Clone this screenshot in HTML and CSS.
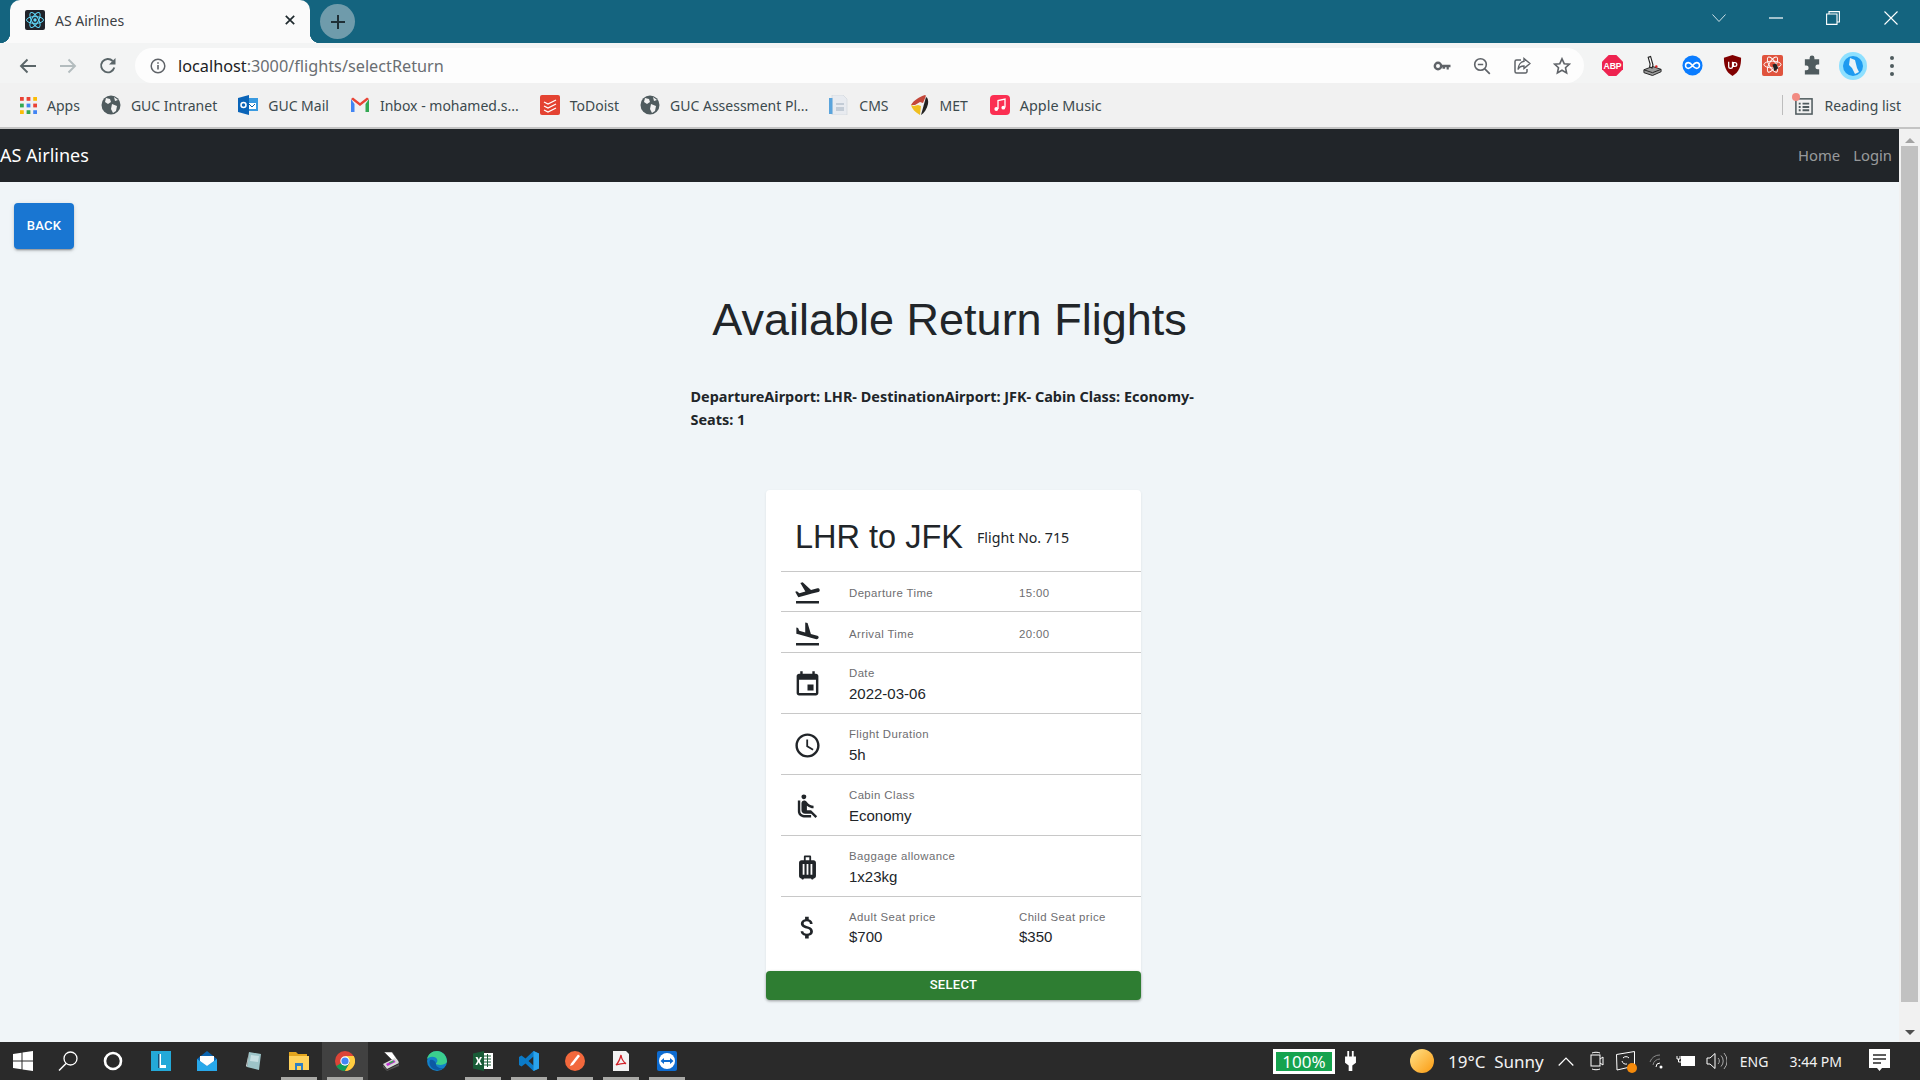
FILE: index.html
```html
<!DOCTYPE html>
<html lang="en">
<head>
<meta charset="utf-8">
<title>AS Airlines</title>
<link rel="stylesheet" href="styles.css">
</head>
<body>
<div class="browser">
  <header class="tabstrip">
    <div class="tab">
      <svg class="favicon" viewBox="0 0 20 20"><rect width="20" height="20" rx="2" fill="#20232a"/><g fill="none" stroke="#61dafb" stroke-width="1"><ellipse cx="10" cy="10" rx="8.5" ry="3.4"/><ellipse cx="10" cy="10" rx="8.5" ry="3.4" transform="rotate(60 10 10)"/><ellipse cx="10" cy="10" rx="8.5" ry="3.4" transform="rotate(120 10 10)"/></g><circle cx="10" cy="10" r="1.7" fill="#61dafb"/></svg>
      <span class="tab-title">AS Airlines</span>
      <svg class="tab-close" viewBox="0 0 10 10"><path d="M.8.8l8.4 8.4M9.2.8L.8 9.2" stroke="#1f2a2e" stroke-width="1.7"/></svg>
    </div>
    <div class="newtab"><svg viewBox="0 0 16 16"><path d="M8 1v14M1 8h14" stroke="#1f2f36" stroke-width="2"/></svg></div>
    <div class="window-controls">
      <svg class="wc-chev" viewBox="0 0 14 8"><path d="M.5.5L7 7.5 13.5.5" fill="none" stroke="#cfe0e6" stroke-width="1"/></svg>
      <svg class="wc-min" viewBox="0 0 14 14"><path d="M0 7h14" stroke="#fff" stroke-width="1.2"/></svg>
      <svg class="wc-max" viewBox="0 0 14 14"><path d="M3 3V.6h10.4V11H11M.6 3h10.4v10.4H.6z" fill="none" stroke="#fff" stroke-width="1.1"/></svg>
      <svg class="wc-close" viewBox="0 0 14 14"><path d="M.5.5l13 13M13.5.5l-13 13" stroke="#fff" stroke-width="1.1"/></svg>
    </div>
  </header>

  <div class="toolbar">
    <svg class="nav-ic nav-back" viewBox="0 0 18 16"><path d="M17 8H2M8.5 1.5L2 8l6.5 6.5" fill="none" stroke="#5a6568" stroke-width="1.9"/></svg>
    <svg class="nav-ic nav-fwd" viewBox="0 0 18 16"><path d="M1 8h15M9.5 1.5L16 8l-6.500 6.500" fill="none" stroke="#b3bcbe" stroke-width="1.900"/></svg>
    <svg class="nav-ic nav-reload" viewBox="0 0 18 18"><path d="M15.300 10.500A6.700 6.700 0 1 1 13.700 4" fill="none" stroke="#5a6568" stroke-width="1.900"/><path d="M16.500 1v6.500H10z" fill="#5a6568"/></svg>
    <div class="omnibox">
      <svg class="info-ic" viewBox="0 0 16 16"><circle cx="8" cy="8" r="6.800" fill="none" stroke="#5f6368" stroke-width="1.500"/><path d="M7.200 7h1.600v4.500H7.200zM7.200 4.200h1.600v1.600H7.200z" fill="#5f6368"/></svg>
      <span class="url"><span class="url-host">localhost</span>:3000/flights/selectReturn</span>
      <div class="omni-icons">
        <svg class="om-ic" viewBox="0 0 18 18"><circle cx="5" cy="9" r="3.200" fill="none" stroke="#5f6368" stroke-width="2.400"/><path d="M8 7.700h9.500v2.500h-1.700v2.300h-2.200v-2.300h-1.500v1.500H9.500v-1.500H8z" fill="#5f6368"/></svg>
        <svg class="om-ic" viewBox="0 0 18 18"><circle cx="7.500" cy="7.500" r="5.800" fill="none" stroke="#5f6368" stroke-width="1.600"/><path d="M4.800 7.500h5.400M11.800 11.800l5 5" stroke="#5f6368" stroke-width="1.700"/></svg>
        <svg class="om-ic" viewBox="0 0 18 18"><path d="M8 3H3.500A1.500 1.500 0 0 0 2 4.500v10A1.500 1.500 0 0 0 3.500 16h9a1.500 1.500 0 0 0 1.500-1.500V12" fill="none" stroke="#5f6368" stroke-width="1.500"/><path d="M11 1.500L17 6.500l-6 5V9c-3 0-5 1-6 3.500C5.200 8.500 7.500 4.800 11 4.300z" fill="none" stroke="#5f6368" stroke-width="1.400"/></svg>
        <svg class="om-ic" viewBox="0 0 18 18"><path d="M9 1.800l2.200 4.900 5.200.5-3.900 3.500 1.100 5.200L9 13.200l-4.600 2.700 1.100-5.200L1.600 7.200l5.200-.5z" fill="none" stroke="#5f6368" stroke-width="1.600"/></svg>
      </div>
    </div>
    <div class="ext-icons">
      <svg class="ext" viewBox="0 0 22 22"><path d="M7 0h8l7 7v8l-7 7H7l-7-7V7z" fill="#ee2350"/><text x="11" y="14.500" class="abp-text">ABP</text></svg>
      <svg class="ext" viewBox="0 0 22 22"><path d="M2 15.500l9-3.500 9 3v2.500l-9 4-9-3z" fill="#9a9a9a" stroke="#222"/><path d="M2 15.500l9 3 9-3.500" fill="none" stroke="#222"/><path d="M6.500 2.500L9 1.500l2.500 9-1 3-2.500-1 .5-3z" fill="#fff" stroke="#222" stroke-width="1.200"/><circle cx="15" cy="12" r="1.300" fill="#d22"/></svg>
      <svg class="ext" viewBox="0 0 22 22"><circle cx="11" cy="11" r="10.500" fill="#0a7cff"/><path d="M11 11c-2-2.500-3-3-4.300-3a3 3 0 0 0 0 6c1.300 0 2.300-.5 4.300-3 2-2.500 3-3 4.300-3a3 3 0 0 1 0 6c-1.300 0-2.300-.5-4.300-3z" fill="none" stroke="#fff" stroke-width="1.600"/></svg>
      <svg class="ext" viewBox="0 0 22 22"><path d="M11 0l9 3c0 9-2 15-9 19C4 18 2 12 2 3z" fill="#800000"/><path d="M7 7v5a2 2 0 0 0 4 0V7M12 12V8h1.500a2 2 0 0 1 0 4z" fill="none" stroke="#fff" stroke-width="1.300"/></svg>
      <svg class="ext" viewBox="0 0 22 22"><rect width="22" height="22" rx="2" fill="#e0533d"/><g fill="none" stroke="#fff" stroke-width="1"><ellipse cx="11" cy="10" rx="9" ry="3.500"/><ellipse cx="11" cy="10" rx="9" ry="3.500" transform="rotate(60 11 10)"/><ellipse cx="11" cy="10" rx="9" ry="3.500" transform="rotate(120 11 10)"/></g><path d="M11 10l4-1 2 5-4 3z" fill="#222"/></svg>
      <svg class="ext" viewBox="0 0 22 22"><path d="M8 3a2.500 2.500 0 0 1 5 0v1.500h5V10h-1.500a2.500 2.500 0 0 0 0 5H18v5.500H3V16h1.500a2.500 2.500 0 0 0 0-5H3V4.500h5z" fill="#4f5b5e"/></svg>
      <svg class="avatar" viewBox="0 0 28 28"><circle cx="14" cy="14" r="14" fill="#8ee0ff"/><circle cx="14" cy="14" r="10" fill="#1e9bf0"/><path d="M11 6l5 2 2 8 2 4-4 2-3-6-3-3z" fill="#e8f3f7"/></svg>
      <svg class="dots" viewBox="0 0 8 22"><circle cx="4" cy="3" r="2" fill="#4f5b5e"/><circle cx="4" cy="11" r="2" fill="#4f5b5e"/><circle cx="4" cy="19" r="2" fill="#4f5b5e"/></svg>
    </div>
  </div>

  <nav class="bookmarks">
    <div class="bm"><svg class="bm-ic" viewBox="0 0 18 18"><g><rect x="0" y="0" width="4" height="4" fill="#ea4335"/><rect x="7" y="0" width="4" height="4" fill="#ea4335"/><rect x="14" y="0" width="4" height="4" fill="#fbbc05"/><rect x="0" y="7" width="4" height="4" fill="#34a853"/><rect x="7" y="7" width="4" height="4" fill="#4285f4"/><rect x="14" y="7" width="4" height="4" fill="#ea4335"/><rect x="0" y="14" width="4" height="4" fill="#fbbc05"/><rect x="7" y="14" width="4" height="4" fill="#34a853"/><rect x="14" y="14" width="4" height="4" fill="#4285f4"/></g></svg>Apps</div>
    <div class="bm"><svg class="bm-ic" viewBox="0 0 20 20"><circle cx="10" cy="10" r="9.500" fill="#4f5b5e"/><path d="M5 3l4 1 1 3-3 2-3-2zM11 9l5 2-1 5-3 2-2-4zM13 2l4 3-3 1z" fill="#f1f1f1"/></svg>GUC Intranet</div>
    <div class="bm"><svg class="bm-ic" viewBox="0 0 20 20"><rect x="8" y="3" width="12" height="13" fill="#3a9ae0"/><path d="M10 8h8v6h-8z" fill="#fff"/><path d="M11 9l3 3 3-3" fill="none" stroke="#0a64b0"/><path d="M0 3l11-3v20L0 17z" fill="#0a64b8"/><circle cx="5.500" cy="10" r="2.500" fill="none" stroke="#fff" stroke-width="1.500"/></svg>GUC Mail</div>
    <div class="bm"><svg class="bm-ic" viewBox="0 0 20 20"><path d="M1 4v13h3.500V9z" fill="#4285f4"/><path d="M15.500 9v8H19V4z" fill="#34a853"/><path d="M1 4l2-1.500L10 8l7-5.500L19 4l-9 7z" fill="#ea4335"/></svg>Inbox - mohamed.s...</div>
    <div class="bm"><svg class="bm-ic" viewBox="0 0 20 20"><rect width="20" height="20" rx="2" fill="#e44332"/><path d="M4 7l4 2 8-4M4 11l4 2 8-4M4 15l4 2 8-4" fill="none" stroke="#fff" stroke-width="1.300"/></svg>ToDoist</div>
    <div class="bm"><svg class="bm-ic" viewBox="0 0 20 20"><circle cx="10" cy="10" r="9.500" fill="#4f5b5e"/><path d="M5 3l4 1 1 3-3 2-3-2zM11 9l5 2-1 5-3 2-2-4zM13 2l4 3-3 1z" fill="#f1f1f1"/></svg>GUC Assessment Pl...</div>
    <div class="bm"><svg class="bm-ic" viewBox="0 0 20 20"><path d="M3 0h11l4 4v16H3z" fill="#e8ebf0" stroke="#cdd3da" stroke-width=".6"/><rect x="0" y="3" width="3.500" height="16" fill="#5aa4dc"/><path d="M7 8h8v2H7zM7 12h8v4H7z" fill="#c3ccd6"/></svg>CMS</div>
    <div class="bm"><svg class="bm-ic" viewBox="0 0 20 20"><path d="M1 10C4 5 9 2 15 0c1 0 1 1 .5 2L13 8l-3-1-5 3z" fill="#c4473a"/><path d="M1 10c1 4 4 7 9 10l1-9-3-1-4 1z" fill="#f0bf20"/><path d="M16 2l-5 18c3-2 6-6 7-11 .5-3 0-6-2-7z" fill="#222"/></svg>MET</div>
    <div class="bm bm-apple"><svg class="bm-ic" viewBox="0 0 20 20"><rect width="20" height="20" rx="4" fill="#fb2f52"/><path d="M8 14V5.500l7-1.500v8.500" fill="none" stroke="#fff" stroke-width="1.300"/><circle cx="6.300" cy="14" r="1.900" fill="#fff"/><circle cx="13.300" cy="12.700" r="1.900" fill="#fff"/></svg>Apple Music</div>
    <div class="reading">
      <span class="reading-sep"></span>
      <span class="reading-icon">
        <svg class="reading-ic" viewBox="0 0 20 20"><rect x="2" y="3" width="17" height="16" fill="none" stroke="#4f5b5e" stroke-width="1.600"/><path d="M5 7h2v2H5zM9 7h7v2H9zM5 10.500h2v2H5zM9 10.500h7v2H9zM5 14h2v2H5zM9 14h7v2H9z" fill="#4f5b5e"/></svg>
        <span class="reading-dot"></span>
      </span>
      Reading list
    </div>
  </nav>

  <div class="viewport">
    <div class="page">
      <div class="navbar">
        <span class="brand">AS Airlines</span>
        <div class="nav-links"><span>Home</span><span>Login</span></div>
      </div>
      <main class="content">
        <button class="btn-back">BACK</button>
        <h1 class="title">Available Return Flights</h1>
        <p class="summary">DepartureAirport: LHR- DestinationAirport: JFK- Cabin Class: Economy- Seats: 1</p>
        <section class="card">
          <div class="card-head">
            <span class="route">LHR to JFK</span>
            <span class="flightno">Flight No. 715</span>
          </div>
          <div class="card-body">
            <div class="row row-s">
              <svg class="ic" viewBox="0 0 24 24"><path d="M2.500 19h19v2h-19v-2zm19.570-9.360c-.21-.8-1.040-1.280-1.840-1.060L14.920 10l-6.900-6.430-1.930.51 4.140 7.170-4.970 1.330-1.970-1.540-1.450.39 1.820 3.160.77 1.330 1.600-.43 5.310-1.420 4.350-1.160L21 11.490c.81-.23 1.280-1.050 1.070-1.850z"/></svg>
              <span class="label">Departure Time</span><span class="label">15:00</span>
            </div>
            <div class="row row-s row-s2">
              <svg class="ic" viewBox="0 0 24 24"><path d="M2.500 19h19v2h-19v-2zm7.180-5.730l4.350 1.160 5.310 1.420c.8.210 1.620-.26 1.840-1.060.21-.8-.26-1.620-1.060-1.840l-5.310-1.420-2.760-9.020L10.120 2v8.280L5.150 8.950l-.93-2.320-1.450-.39v5.170l1.600.43 5.310 1.430z"/></svg>
              <span class="label">Arrival Time</span><span class="label">20:00</span>
            </div>
            <div class="row">
              <svg class="ic" viewBox="0 0 24 24"><path d="M17 12h-5v5h5v-5zM16 1v2H8V1H6v2H5c-1.110 0-1.990.9-1.990 2L3 19c0 1.100.89 2 2 2h14c1.100 0 2-.9 2-2V5c0-1.100-.9-2-2-2h-1V1h-2zm3 18H5V8h14v11z"/></svg>
              <div class="stat"><span class="label">Date</span><span class="value">2022-03-06</span></div>
            </div>
            <div class="row">
              <svg class="ic" viewBox="0 0 24 24"><path d="M11.990 2C6.470 2 2 6.480 2 12s4.470 10 9.990 10C17.520 22 22 17.520 22 12S17.520 2 11.990 2zM12 20c-4.420 0-8-3.580-8-8s3.580-8 8-8 8 3.580 8 8-3.580 8-8 8zm.5-13H11v6l5.250 3.150.75-1.230-4.500-2.670z"/></svg>
              <div class="stat"><span class="label">Flight Duration</span><span class="value">5h</span></div>
            </div>
            <div class="row">
              <svg class="ic" viewBox="0 0 24 24"><path d="M7.590 5.410c-.78-.78-.78-2.050 0-2.830.78-.78 2.050-.78 2.830 0 .78.78.78 2.050 0 2.830-.79.79-2.050.79-2.830 0zM6 16V7H4v9c0 2.760 2.240 5 5 5h6v-2H9c-1.660 0-3-1.340-3-3zm14 4.070L14.930 15H11.500v-3.680c1.400 1.150 3.600 2.160 5.500 2.160v-2.160c-1.660.02-3.610-.87-4.670-2.040l-1.400-1.550c-.19-.21-.43-.38-.69-.5-.29-.14-.62-.23-.96-.23h-.03C8.010 7 7 8.010 7 9.250V15c0 1.660 1.340 3 3 3h5.070l3.500 3.500L20 20.070z"/></svg>
              <div class="stat"><span class="label">Cabin Class</span><span class="value">Economy</span></div>
            </div>
            <div class="row">
              <svg class="ic" viewBox="0 0 24 24"><path d="M17 6h-2V3c0-.55-.45-1-1-1h-4c-.55 0-1 .45-1 1v3H7c-1.100 0-2 .9-2 2v11c0 1.100.9 2 2 2 0 .55.45 1 1 1s1-.45 1-1h6c0 .55.45 1 1 1s1-.45 1-1c1.100 0 2-.9 2-2V8c0-1.100-.9-2-2-2zM9.500 18H8V9h1.500v9zm3.250 0h-1.500V9h1.500v9zm.75-12h-3V3.500h3V6zM16 18h-1.500V9H16v9z"/></svg>
              <div class="stat"><span class="label">Baggage allowance</span><span class="value">1x23kg</span></div>
            </div>
            <div class="row row-price">
              <svg class="ic" viewBox="0 0 24 24"><path d="M11.800 10.900c-2.270-.59-3-1.200-3-2.150 0-1.090 1.010-1.850 2.700-1.850 1.780 0 2.440.85 2.500 2.100h2.210c-.07-1.720-1.120-3.300-3.210-3.810V3h-3v2.160c-1.940.42-3.500 1.680-3.500 3.610 0 2.310 1.910 3.460 4.700 4.130 2.500.6 3 1.480 3 2.410 0 .69-.49 1.790-2.700 1.790-2.060 0-2.870-.92-2.980-2.100h-2.200c.12 2.190 1.760 3.420 3.680 3.830V21h3v-2.150c1.950-.37 3.500-1.500 3.500-3.550 0-2.840-2.430-3.810-4.700-4.400z"/></svg>
              <div class="stat"><span class="label">Adult Seat price</span><span class="value">$700</span></div>
              <div class="stat"><span class="label">Child Seat price</span><span class="value">$350</span></div>
            </div>
          </div>
          <button class="btn-select">SELECT</button>
        </section>
      </main>
    </div>
    <aside class="scrollbar">
      <span class="arrow-up"></span>
      <span class="thumb"></span>
      <span class="arrow-down"></span>
    </aside>
  </div>

  <footer class="taskbar">
    <div class="tb-apps">
      <div class="tb tb-n"><svg viewBox="0 0 20 20"><path d="M0 3l8.500-1.300V9.500H0zM9.500 1.500L20 0v9.500H9.500zM0 10.500h8.500v7.800L0 17zM9.500 10.500H20V20L9.500 18.500z" fill="#fff"/></svg></div>
      <div class="tb tb-n"><svg viewBox="0 0 20 20"><circle cx="12.500" cy="7.500" r="6.500" fill="none" stroke="#fff" stroke-width="1.300"/><path d="M8 12.500L1 19.500" stroke="#fff" stroke-width="1.500"/></svg></div>
      <div class="tb tb-n"><svg viewBox="0 0 20 20"><circle cx="10" cy="10" r="8" fill="none" stroke="#fff" stroke-width="2.600"/></svg></div>
      <div class="tb tb-gap"><svg viewBox="0 0 20 20"><rect width="20" height="20" fill="#24a9d8"/><path d="M7 3h3v11h5v3H7z" fill="#fff"/><path d="M7 3h1.500v14H7z" fill="#12517a"/></svg></div>
      <div class="tb"><svg viewBox="0 0 20 20"><path d="M0 8l10-8 10 8v12H0z" fill="#0a64b0"/><path d="M0 8l10 7 10-7v12H0z" fill="#28a8ea"/><path d="M3 5h14v5l-7 5-7-5z" fill="#fff"/></svg></div>
      <div class="tb"><svg viewBox="0 0 20 20"><path d="M6 1l12 2-2 16-12-3z" fill="#9dc4c8"/><path d="M6 1L3 15l1 1 2-15z" fill="#d8dee0"/><path d="M8 4l8 1-1 6-8-1z" fill="#c7dfe2"/></svg></div>
      <div class="tb tb-u"><svg viewBox="0 0 20 20"><path d="M0 1h7l2 2h9v3H0z" fill="#e3a51e"/><path d="M0 5h20v14H0z" fill="#ffd25c"/><path d="M6 12h8v7h-2v-4H8v4H6z" fill="#2f7fc4"/></svg></div>
      <div class="tb tb-u tb-active"><svg viewBox="0 0 20 20"><circle cx="10" cy="10" r="10" fill="#db4437"/><path d="M10 10L1.300 15a10 10 0 0 0 8.700 5l5-8.700z" fill="#0f9d58"/><path d="M10 5h8.700A10 10 0 0 1 10 20l5-8.700z" fill="#ffcd40"/><circle cx="10" cy="10" r="4.700" fill="#fff"/><circle cx="10" cy="10" r="3.600" fill="#4285f4"/></svg></div>
      <div class="tb"><svg viewBox="0 0 20 20"><path d="M3 1h8l7 10-3 2z" fill="#fff" stroke="#333" stroke-width=".5"/><path d="M2 13l12-6 4 5-12 6z" fill="#d7d7d7"/><path d="M5 13l8-4 1.500 2-8 4z" fill="#c12dd4"/><path d="M8 11.500l4-2 1 1.300-4 2z" fill="#2fb04a"/><path d="M2 14l4 5 12-6v2L6 20l-4-4z" fill="#555"/></svg></div>
      <div class="tb"><svg viewBox="0 0 20 20"><circle cx="10" cy="10" r="10" fill="#1380c8"/><path d="M20 11c0-6-4-11-10-11C5 0 1 3 0 8c3-3 8-3 10 0 1 2 0 4-2 5 3 1 9 2 12-2z" fill="#3bcf8e"/><path d="M3 9c-2 5 2 10 8 10 2 0 4-.8 6-2-4 1-8-1-8-4 0-2-3-5-6-4z" fill="#0c59a4"/></svg></div>
      <div class="tb tb-u"><svg viewBox="0 0 20 20"><rect x="8" y="2" width="12" height="16" fill="#fff"/><path d="M11 5h7M11 8h7M11 11h7M11 14h7M14.500 3v13" stroke="#185c37"/><path d="M0 2.500L11 0v20L0 17.500z" fill="#185c37"/><path d="M2.500 6h2l1.300 2.700L7 6h2L6.900 10 9 14H7l-1.300-2.800L4.300 14h-2l2.200-4z" fill="#fff"/></svg></div>
      <div class="tb tb-u"><svg viewBox="0 0 20 20"><path d="M14.500 0L20 2.500v15L14.500 20l-8-7.500-4 3L0 14v-8l2.500-1.500 4 3zM14.500 5.500l-5 4.500 5 4.500z" fill="#0b7bc8"/><path d="M14.500 0L20 2.500v15L14.500 20z" fill="#2aa3ec"/></svg></div>
      <div class="tb tb-u"><svg viewBox="0 0 20 20"><circle cx="10" cy="10" r="10" fill="#f2683c"/><path d="M5 15l3-1 7-9-2-1.500-7 9z" fill="#fff"/></svg></div>
      <div class="tb tb-u"><svg viewBox="0 0 20 20"><path d="M2 0h13l3 3v17H2z" fill="#f3f3f3"/><path d="M10 4c-.7 3-2 7-5 10 3-1 7-2 10-1.500-2.500-1.500-4.500-5-5-8.500z" fill="none" stroke="#d2232a" stroke-width="1.300"/></svg></div>
      <div class="tb tb-u"><svg viewBox="0 0 20 20"><rect width="20" height="20" rx="2" fill="#0d6bd0"/><circle cx="10" cy="10" r="8" fill="#fff"/><path d="M3.500 10L7 7v2h6V7l3.500 3L13 13v-2H7v2z" fill="#0d6bd0"/></svg></div>
    </div>
    <div class="tray">
      <div class="battery-meter"><span class="battery-fill">100%</span></div>
      <svg class="plug" viewBox="0 0 12 22"><path d="M2.500 0h2v6h3V0h2v6H12v7l-4 3v6H4v-6l-4-3V6h2.500z" fill="#fff"/></svg>
      <span class="sun"></span>
      <span class="weather">19°C&nbsp; Sunny</span>
      <svg class="tray-ic caret" viewBox="0 0 16 9"><path d="M.7 8.500L8 1l7.300 7.500" fill="none" stroke="#fff" stroke-width="1.200"/></svg>
      <svg class="tray-ic cam" viewBox="0 0 14 20"><rect x="1" y="4" width="9" height="11" fill="none" stroke="#fff"/><path d="M10 8l3-2v8l-3-2M2 2c2-1 6-1 8 0M2 18c2 1 6 1 8 0" fill="none" stroke="#fff"/></svg>
      <span class="share-wrap">
        <svg class="tray-ic share" viewBox="0 0 20 20"><path d="M.5 3.500l18-3V15l-17.500 4z" fill="none" stroke="#fff"/><path d="M7 7a4 4 0 0 1 6 0M11 13a4 4 0 0 1-5-3" fill="none" stroke="#fff"/></svg>
        <span class="share-dot"></span>
      </span>
      <svg class="tray-ic wifi" viewBox="0 0 16 16"><path d="M1 9a10 10 0 0 1 10-7M4 12a7 7 0 0 1 7-6" fill="none" stroke="#8a8a8a"/><path d="M7 14a4 4 0 0 1 4-4" fill="none" stroke="#fff"/><circle cx="12" cy="14" r="1.500" fill="#fff"/></svg>
      <svg class="tray-ic bat" viewBox="0 0 20 14"><rect x="5.500" y="2.500" width="13" height="9" fill="#fff" stroke="#fff"/><path d="M1 2v3h3V2M2.500 5v3h3" fill="none" stroke="#fff"/></svg>
      <svg class="tray-ic spk" viewBox="0 0 21 18"><path d="M1 6h3l5-4.500v15L4 12H1z" fill="none" stroke="#fff"/><path d="M12 6a4 4 0 0 1 0 6M15 3.500a8 8 0 0 1 0 11M18 1a12 12 0 0 1 0 16" fill="none" stroke="#aaa"/></svg>
      <span class="lang">ENG</span>
      <span class="clock">3:44 PM</span>
      <svg class="notif" viewBox="0 0 21 24"><path d="M0 0h21v19h-8l-2.500 3-2.500-3H0z" fill="#fff"/><path d="M4 6h13M4 10h13M4 14h8" stroke="#2a2a2a" stroke-width="1.300"/></svg>
    </div>
  </footer>
</div>
</body>
</html>
```

FILE: styles.css
```css
* { box-sizing: border-box; }
html, body { margin: 0; height: 100%; overflow: hidden; }
body { font-family: "Noto Sans", "Liberation Sans", sans-serif; color: #212529; }
svg { display: block; flex: none; }

.browser { display: flex; flex-direction: column; width: 1920px; height: 1080px; }

/* tab strip */
.tabstrip { display: flex; align-items: flex-start; height: 43px; background: #14647f; padding-left: 10px; flex: none; }
.tab { position: relative; display: flex; align-items: center; width: 300px; height: 43px; padding: 0 15px 3px; background: #fafafa; border-radius: 10px 10px 0 0; gap: 10px; }
.tab::before, .tab::after { content: ""; position: absolute; bottom: 0; width: 10px; height: 10px; }
.tab::before { left: -10px; background: radial-gradient(circle at 0 0, transparent 10px, #fafafa 10.500px); }
.tab::after { right: -10px; background: radial-gradient(circle at 100% 0, transparent 10px, #fafafa 10.500px); }
.favicon { width: 20px; height: 20px; }
.tab-title { flex: 1; font-size: 14px; color: #3c4043; }
.tab-close { width: 10px; height: 10px; }
.newtab { display: flex; align-items: center; justify-content: center; width: 35px; height: 35px; margin: 4px 0 0 10px; border-radius: 50%; background: #6f9bab; }
.newtab svg { width: 16px; height: 16px; }
.window-controls { display: flex; align-items: center; margin-left: auto; height: 36px; padding-right: 22px; }
.wc-chev { width: 14px; height: 8px; margin-right: 43px; }
.wc-min, .wc-max, .wc-close { width: 14px; height: 14px; }
.wc-min { margin-right: 43px; }
.wc-max { margin-right: 44px; }

/* toolbar */
.toolbar { display: flex; align-items: center; height: 40px; padding: 5px 0 0 19px; background: #f3f4f4; flex: none; }
.nav-ic { width: 18px; height: 16px; }
.nav-fwd { margin-left: 22px; }
.nav-reload { margin-left: 22px; height: 18px; }
.omnibox { display: flex; align-items: center; width: 1449px; height: 35px; margin-left: 18px; padding: 0 13px 0 15px; background: #fdfdfd; border-radius: 18px; }
.info-ic { width: 16px; height: 16px; }
.url { margin-left: 12px; font-size: 16.250px; color: #6a6e72; }
.url-host { color: #202124; }
.omni-icons { display: flex; gap: 22px; margin-left: auto; }
.om-ic { width: 18px; height: 18px; }
.ext-icons { display: flex; align-items: center; margin-left: 18px; }
.ext { width: 21px; height: 21px; margin-right: 19px; }
.abp-text { font: 700 9px "Liberation Sans", sans-serif; fill: #fff; text-anchor: middle; }
.avatar { width: 28px; height: 28px; margin-left: -3px; }
.dots { width: 8px; height: 22px; margin-left: 21px; }

/* bookmarks */
.bookmarks { display: flex; align-items: center; gap: 21px; height: 46px; padding: 0 19px 0 20px; background: #f1f1f1; border-bottom: 2px solid #c4c4c4; flex: none; font-size: 14px; color: #3c4a4e; }
.bm { display: flex; align-items: center; gap: 10px; white-space: nowrap; }
.bm-ic { width: 20px; height: 20px; }
.bm:first-child .bm-ic { width: 17px; height: 17px; }
.bm-apple { margin-left: 1px; font-size: 14.400px; }
.reading { display: flex; align-items: center; gap: 11px; margin-left: auto; }
.reading-sep { width: 1px; height: 20px; background: #bdbdbd; }
.reading-icon { position: relative; display: block; }
.reading-ic { width: 19px; height: 19px; }
.reading-dot { position: absolute; left: -2px; top: -3px; width: 8px; height: 8px; border-radius: 50%; background: #f28b82; }

/* viewport */
.viewport { display: flex; flex: 1; min-height: 0; background: #f0f5f8; }
.page { flex: 1; min-width: 0; overflow: hidden; }
.navbar { display: flex; align-items: center; justify-content: space-between; height: 53px; background: #212529; padding: 0 7px 2px 0; }
.brand { font-size: 18px; color: #fff; }
.nav-links { display: flex; gap: 13px; font-size: 14.800px; color: rgba(255, 255, 255, .55); }

.content { display: flex; flex-direction: column; }
.btn-back { align-self: flex-start; width: 60px; height: 46px; margin: 21px 0 0 14px; padding: 0 0 2px; border: 0; border-radius: 4px; background: #1976d2; color: #fff; font: 500 13px "Roboto", "Liberation Sans", sans-serif; letter-spacing: .3px; box-shadow: 0 3px 1px -2px rgba(0,0,0,.2), 0 2px 2px rgba(0,0,0,.14), 0 1px 5px rgba(0,0,0,.12); }
.title { margin: 45px 0 0; font: 400 45px/52px "Liberation Sans", sans-serif; text-align: center; }
.summary { align-self: center; width: 518px; margin: 39px 0 0; font-size: 14.450px; font-weight: 700; line-height: 23px; }

.card { align-self: center; width: 375px; margin: 59px 0 0 8px; background: #fff; border-radius: 4px; box-shadow: 0 1px 3px rgba(0,0,0,.08); }
.card-head { display: flex; align-items: center; gap: 14px; height: 81px; padding: 13px 0 0 29px; }
.route { font: 400 32.500px/40px "Liberation Sans", sans-serif; }
.flightno { font-size: 14.200px; color: #212529; }
.card-body { margin-left: 15px; }
.row { display: grid; grid-template-columns: 68px 170px 1fr; align-items: center; height: 61px; padding-top: 2px; border-top: 1px solid #c8c8c8; }
.row-s { height: 40px; }
.row-s2 { height: 41px; padding-top: 4px; }
.row-price { height: 75px; align-items: start; padding-top: 13px; }
.row-price .ic { margin-top: 3px; }
.ic { width: 29px; height: 29px; margin-left: 12px; fill: #212529; }
.stat { display: flex; flex-direction: column; gap: 5px; }
.row-price .stat { gap: 4px; }
.label { font: 400 11.400px/14px "Liberation Sans", sans-serif; letter-spacing: .4px; color: #6d6d70; }
.value { font: 400 15px/18px "Liberation Sans", sans-serif; color: #212529; }
.btn-select { display: block; width: 100%; height: 29px; padding: 0 0 2px; border: 0; border-radius: 4px; background: #2e7d32; color: #fff; font: 500 13px "Roboto", "Liberation Sans", sans-serif; letter-spacing: .3px; box-shadow: 0 1px 3px rgba(0,0,0,.3); }

/* scrollbar */
.scrollbar { display: flex; flex-direction: column; align-items: center; width: 21px; background: #f1f1f1; flex: none; }
.arrow-up, .arrow-down { width: 0; height: 0; border: 5px solid transparent; }
.arrow-up { border-bottom: 5px solid #a3a3a3; margin-top: 4px; }
.arrow-down { border-top: 5px solid #505050; margin-top: 28px; }
.thumb { width: 17px; height: 856px; margin-top: 3px; background: #c1c1c1; }

/* taskbar */
.taskbar { display: flex; align-items: stretch; height: 38px; background: #2a2a2a; flex: none; }
.tb-apps { display: flex; }
.tb { position: relative; display: flex; align-items: center; justify-content: center; width: 46px; }
.tb svg { width: 20px; height: 20px; }
.tb-n { width: 45px; }
.tb-gap { margin-left: 3px; }
.tb-active { background: #414141; }
.tb-u::after { content: ""; position: absolute; left: 5px; right: 5px; bottom: 0; height: 3px; background: #a9a9a6; }
.tray { display: flex; align-items: center; margin-left: auto; padding-right: 30px; color: #f2f2f2; }
.battery-meter { display: flex; width: 62px; height: 25px; border: 3px solid #fff; background: #16a34f; align-items: center; justify-content: center; }
.battery-fill { font-size: 17px; color: #fff; line-height: 19px; }
.plug { width: 11px; height: 20px; margin-left: 10px; }
.sun { width: 24px; height: 24px; margin-left: 54px; border-radius: 50%; background: linear-gradient(135deg, #ffe28a, #fb9a10); }
.weather { margin-left: 14px; font-size: 17px; white-space: nowrap; }
.tray-ic { flex: none; }
.caret { width: 16px; height: 9px; margin-left: 14px; }
.cam { width: 14px; height: 20px; margin-left: 16px; }
.share-wrap { position: relative; display: block; margin-left: 12px; }
.share { width: 20px; height: 20px; }
.share-dot { position: absolute; right: -1px; bottom: -2px; width: 10px; height: 10px; border-radius: 50%; background: #f58a0b; }
.wifi { width: 16px; height: 16px; margin-left: 13px; }
.bat { width: 20px; height: 14px; margin-left: 11px; }
.spk { width: 21px; height: 18px; margin-left: 10px; }
.lang { margin-left: 13px; font-size: 14px; }
.clock { margin-left: 21px; font-size: 14px; white-space: nowrap; }
.notif { width: 21px; height: 24px; margin-left: 27px; }
```
